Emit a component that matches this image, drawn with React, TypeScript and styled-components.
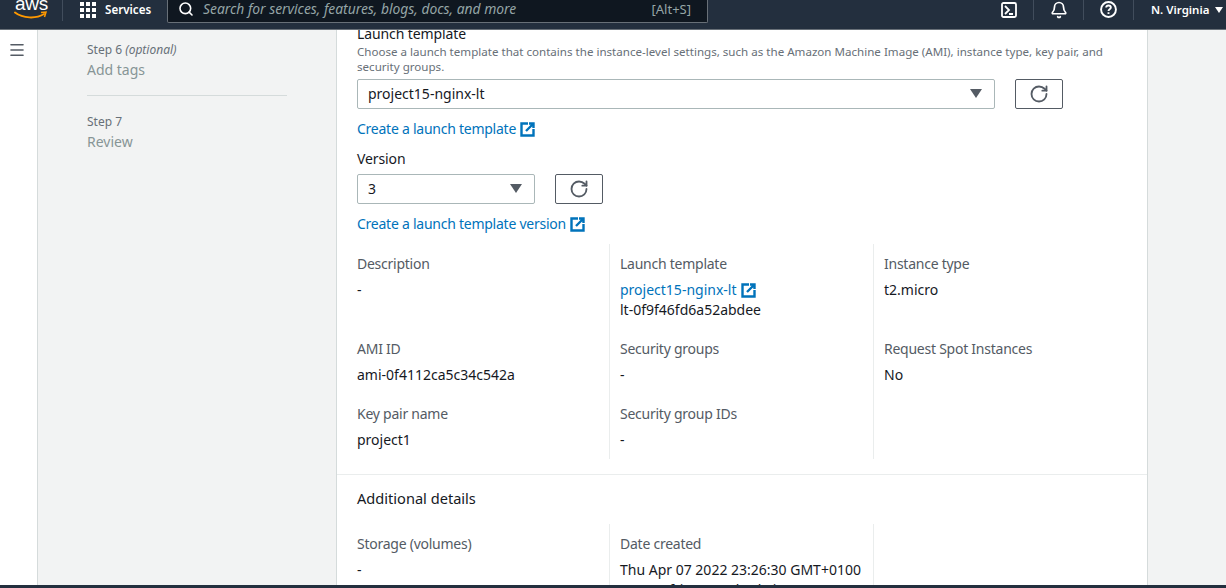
import { createGlobalStyle } from 'styled-components'
import styled from 'styled-components'
import { Search, RotateCw, Bell, Menu } from 'lucide-react'

const GlobalStyle = createGlobalStyle`
  html, body {
    margin: 0;
    padding: 0;
    background: #fff;
    font-family: "Noto Sans", "Open Sans", Arial, sans-serif;
    font-size: 14px;
    color: #16191f;
  }
  * { box-sizing: border-box; }
`

const Page = styled.div`
  width: 1226px;
  height: 588px;
  display: flex;
  flex-direction: column;
  overflow: hidden;
`

const TopBar = styled.header`
  height: 30px;
  flex: none;
  display: flex;
  align-items: center;
  padding-bottom: 10px;
  background: #232f3e;
  border-bottom: 1px solid #687078;
  overflow: hidden;
  color: #fff;
`

const Logo = styled.div`
  width: 63px;
  height: 21px;
  align-self: flex-start;
  flex: none;
  position: relative;
  border-right: 1px solid #414d5c;
`

const LogoWord = styled.span`
  position: absolute;
  left: 15px;
  top: -8px;
  font-family: "Liberation Sans", Arial, sans-serif;
  font-size: 19px;
  line-height: 24px;
  letter-spacing: -0.3px;
`

const LogoSmile = styled.svg`
  position: absolute;
  left: 14px;
  top: 11px;
`

const ServicesButton = styled.div`
  width: 104px;
  flex: none;
  display: flex;
  align-items: center;
  gap: 9px;
  padding-left: 17px;
  font-size: 11.6px;
  font-weight: 600;
`

const SearchBox = styled.div`
  width: 541px;
  height: 24px;
  margin-top: -1px;
  align-self: flex-start;
  flex: none;
  display: flex;
  align-items: center;
  padding: 0 16px 4px 10px;
  background: #0f1720;
  border: 1px solid #687078;
  border-top: none;
  border-radius: 0 0 2px 2px;
`

const SearchText = styled.span`
  flex: 1;
  margin-left: 9px;
  font-style: italic;
  font-size: 13.85px;
  color: #95a5a6;
`

const Shortcut = styled.span`
  font-size: 13px;
  color: #95a5a6;
`

const TopActions = styled.div`
  flex: 1;
  display: flex;
  align-items: center;
  justify-content: flex-end;
  height: 100%;
`

const ActionIcon = styled.div<{ $width: number }>`
  width: ${(props) => props.$width}px;
  height: 21px;
  display: flex;
  align-items: center;
  justify-content: center;
  border-right: 1px solid #414d5c;
`

const Region = styled.div`
  width: 92px;
  display: flex;
  align-items: center;
  gap: 6px;
  padding-left: 17px;
  font-size: 11.5px;
  font-weight: 600;
`

const Caret = styled.span<{ $size?: number; $color?: string }>`
  width: 0;
  height: 0;
  border-left: ${(props) => props.$size || 4}px solid transparent;
  border-right: ${(props) => props.$size || 4}px solid transparent;
  border-top: ${(props) => (props.$size ? props.$size * 1.6 : 6)}px solid ${(props) => props.$color || '#fff'};
`

const Body = styled.div`
  flex: 1;
  min-height: 0;
  display: flex;
  background: #f2f3f3;
`

const Rail = styled.div`
  width: 38px;
  flex: none;
  padding: 11px 0 0 8px;
  background: #fff;
  border-right: 1px solid #d5dbdb;
  color: #545b64;
`

const Steps = styled.nav`
  width: 299px;
  flex: none;
  padding: 10px 0 0 49px;
  border-right: 1px solid #d5dbdb;
`

const StepLabel = styled.div`
  font-size: 12px;
  line-height: 20px;
  color: #687078;

  em {
    font-style: italic;
  }
`

const StepName = styled.div`
  font-size: 14px;
  line-height: 20px;
  color: #879596;
`

const StepRule = styled.hr`
  width: 200px;
  height: 1px;
  margin: 15px 0 16px;
  border: 0;
  background: #d5dbdb;
`

const Main = styled.main`
  width: 811px;
  flex: none;
  background: #fff;
  border-right: 1px solid #d5dbdb;
  overflow: hidden;
`

const Section = styled.section`
  margin-top: -6px;
  padding: 0 20px;
`

const FieldTitle = styled.div`
  font-size: 14px;
  line-height: 20px;
  letter-spacing: -0.1px;
  color: #16191f;
`

const FieldHint = styled.div`
  font-size: 11.58px;
  line-height: 15px;
  color: #687078;
`

const SelectRow = styled.div`
  display: flex;
  align-items: center;
  gap: 20px;
  margin-top: 5px;
`

const SelectBox = styled.div<{ $width: number }>`
  width: ${(props) => props.$width}px;
  height: 30px;
  flex: none;
  display: flex;
  align-items: center;
  justify-content: space-between;
  padding: 0 12px 2px 10px;
  border: 1px solid #aab7b8;
  border-radius: 2px;
  font-size: 14px;
  color: #16191f;
`

const RefreshButton = styled.div`
  width: 48px;
  height: 30px;
  flex: none;
  display: flex;
  align-items: center;
  justify-content: center;
  border: 1px solid #545b64;
  border-radius: 2px;
  color: #545b64;
`

const LinkRow = styled.div<{ $top?: number; $tight?: boolean }>`
  display: flex;
  align-items: center;
  gap: 4px;
  margin-top: ${(props) => props.$top || 0}px;
  line-height: 20px;
  color: #0073bb;
  font-size: 14px;
  letter-spacing: ${(props) => (props.$tight ? '-0.25px' : '0')};
`

const VersionTitle = styled(FieldTitle)`
  margin-top: 10px;
`

const DetailGrid = styled.div<{ $top: number }>`
  display: grid;
  grid-template-columns: 252px 264px 254px;
  margin-top: ${(props) => props.$top}px;
`

const Cell = styled.div`
  padding: 10px 10px 9px;
  border-left: 1px solid #eaeded;

  &:nth-child(3n + 1) {
    padding-left: 0;
    border-left: none;
  }
`

const Label = styled.div`
  line-height: 20px;
  letter-spacing: -0.25px;
  color: #545b64;
  margin-bottom: 6px;
`

const Value = styled.div`
  line-height: 20px;
  color: #16191f;
`

const Divider = styled.hr`
  height: 1px;
  margin: 15px 0 13px;
  border: 0;
  background: #eaeded;
`

const SectionTitle = styled.h3`
  margin: 0 20px;
  font-size: 14.6px;
  font-weight: 400;
  line-height: 20px;
  color: #16191f;
`

const BottomBar = styled.footer`
  height: 3px;
  flex: none;
  background: #232f3e;
`

const NarrowSection = styled.div`
  padding: 0 20px;
`

function ExternalIcon() {
  return (
    <svg width="15" height="15" viewBox="0 0 15 15" fill="none" stroke="#0073bb" strokeWidth="2.4">
      <path d="M8 1.5H1.5v12h12V7" />
      <path d="M9 1.5h4.5V6M13.5 1.5L6 9" />
    </svg>
  )
}

function ShellIcon() {
  return (
    <svg width="16" height="16" viewBox="0 0 16 16" fill="none" stroke="#fff" strokeWidth="1.8">
      <rect x="1" y="1" width="14" height="14" rx="1.5" />
      <path d="M4 4l4 4-4 4M8 12h4" />
    </svg>
  )
}

function HelpIcon() {
  return (
    <svg width="17" height="17" viewBox="0 0 16 16" fill="none" stroke="#fff" strokeWidth="1.8">
      <circle cx="8" cy="8" r="7" />
      <path d="M5.8 6.2C5.8 5 6.8 4.2 8 4.2s2.2.8 2.2 2c0 1.6-2.2 1.6-2.2 3.2" />
      <path d="M8 10.6v1.6" />
    </svg>
  )
}

function GridIcon() {
  return (
    <svg width="16" height="16" viewBox="0 0 16 16" fill="#fff">
      {[0, 6, 12].flatMap((y) =>
        [0, 6, 12].map((x) => <rect key={`${x}-${y}`} x={x} y={y} width="4" height="4" />)
      )}
    </svg>
  )
}

type Detail = { label: string; link?: string; values: string[] }

const details: Detail[] = [
  { label: 'Description', values: ['-'] },
  { label: 'Launch template', link: 'project15-nginx-lt', values: ['lt-0f9f46fd6a52abdee'] },
  { label: 'Instance type', values: ['t2.micro'] },
  { label: 'AMI ID', values: ['ami-0f4112ca5c34c542a'] },
  { label: 'Security groups', values: ['-'] },
  { label: 'Request Spot Instances', values: ['No'] },
  { label: 'Key pair name', values: ['project1'] },
  { label: 'Security group IDs', values: ['-'] },
  { label: '', values: [] },
]

const additional: Detail[] = [
  { label: 'Storage (volumes)', values: ['-'] },
  { label: 'Date created', values: ['Thu Apr 07 2022 23:26:30 GMT+0100', '(West Africa Standard Time)'] },
  { label: '', values: [] },
]

function DetailCell({ item }: { item: Detail }) {
  return (
    <Cell>
      {item.label && <Label>{item.label}</Label>}
      {item.link && (
        <LinkRow>
          {item.link}
          <ExternalIcon />
        </LinkRow>
      )}
      {item.values.map((value) => (
        <Value key={value}>{value}</Value>
      ))}
    </Cell>
  )
}

export default function App() {
  return (
    <Page>
      <GlobalStyle />
      <TopBar>
        <Logo>
          <LogoWord>aws</LogoWord>
          <LogoSmile width="34" height="10" viewBox="0 0 34 10" fill="none">
            <path d="M1 1.5C9 7.5 22 8 30 3" stroke="#ff9900" strokeWidth="2" strokeLinecap="round" />
            <path d="M27 1.5l5-.5-1.5 5" stroke="#ff9900" strokeWidth="1.5" />
          </LogoSmile>
        </Logo>
        <ServicesButton>
          <GridIcon />
          Services
        </ServicesButton>
        <SearchBox>
          <Search size={16} color="#fff" strokeWidth={2.4} />
          <SearchText>Search for services, features, blogs, docs, and more</SearchText>
          <Shortcut>[Alt+S]</Shortcut>
        </SearchBox>
        <TopActions>
          <ActionIcon $width={50}>
            <ShellIcon />
          </ActionIcon>
          <ActionIcon $width={50}>
            <Bell size={18} color="#fff" strokeWidth={2.3} />
          </ActionIcon>
          <ActionIcon $width={50}>
            <HelpIcon />
          </ActionIcon>
          <Region>
            N. Virginia
            <Caret />
          </Region>
        </TopActions>
      </TopBar>
      <Body>
        <Rail>
          <Menu size={18} strokeWidth={2.2} />
        </Rail>
        <Steps>
          <StepLabel>
            Step 6 <em>(optional)</em>
          </StepLabel>
          <StepName>Add tags</StepName>
          <StepRule />
          <StepLabel>Step 7</StepLabel>
          <StepName>Review</StepName>
        </Steps>
        <Main>
          <Section>
            <FieldTitle>Launch template</FieldTitle>
            <FieldHint>
              Choose a launch template that contains the instance-level settings, such as the Amazon Machine Image
              (AMI), instance type, key pair, and
              <br />
              security groups.
            </FieldHint>
            <SelectRow>
              <SelectBox $width={638}>
                project15-nginx-lt
                <Caret $size={6} $color="#545b64" />
              </SelectBox>
              <RefreshButton>
                <RotateCw size={20} strokeWidth={2.2} />
              </RefreshButton>
            </SelectRow>
            <LinkRow $top={10} $tight>
              Create a launch template
              <ExternalIcon />
            </LinkRow>
            <VersionTitle>Version</VersionTitle>
            <SelectRow>
              <SelectBox $width={178}>
                3
                <Caret $size={6} $color="#545b64" />
              </SelectBox>
              <RefreshButton>
                <RotateCw size={20} strokeWidth={2.2} />
              </RefreshButton>
            </SelectRow>
            <LinkRow $top={10} $tight>
              Create a launch template version
              <ExternalIcon />
            </LinkRow>
            <DetailGrid $top={10}>
              {details.map((item, index) => (
                <DetailCell key={index} item={item} />
              ))}
            </DetailGrid>
          </Section>
          <Divider />
          <SectionTitle>Additional details</SectionTitle>
          <NarrowSection>
            <DetailGrid $top={16}>
              {additional.map((item, index) => (
                <DetailCell key={index} item={item} />
              ))}
            </DetailGrid>
          </NarrowSection>
        </Main>
      </Body>
      <BottomBar />
    </Page>
  )
}
